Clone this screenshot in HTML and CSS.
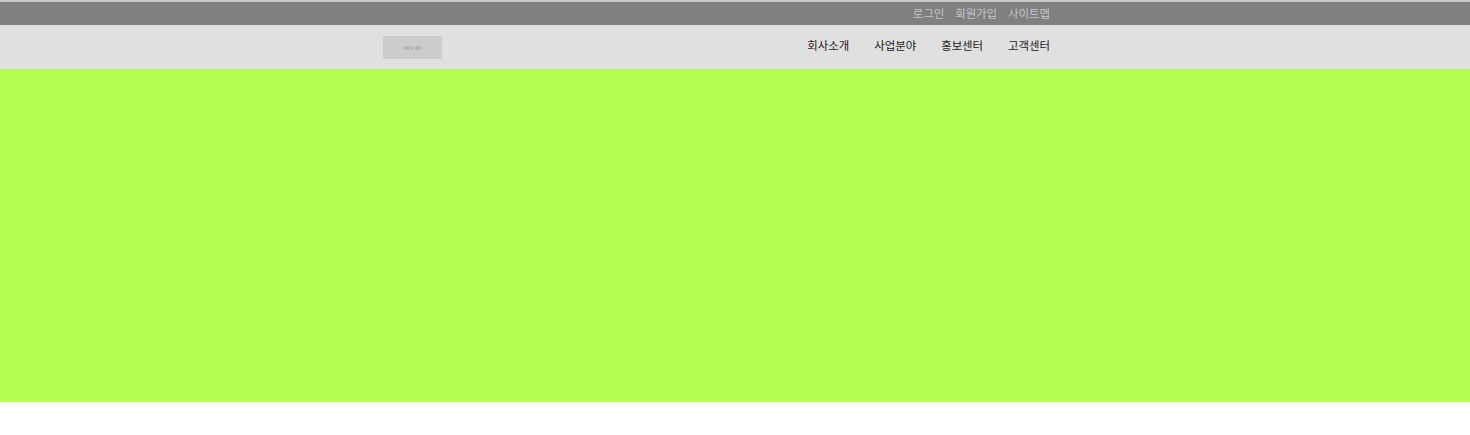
FILE: index.html
```html
<!DOCTYPE html>
<html lang="ko">
<head>
<meta charset="utf-8">
<title>Home</title>
<link rel="stylesheet" href="styles.css">
</head>
<body>
<div class="topline"></div>
<div class="topbar">
  <div class="inner topbar-inner">
    <a href="#">로그인</a>
    <a href="#">회원가입</a>
    <a href="#">사이트맵</a>
  </div>
</div>
<header class="header">
  <div class="inner header-inner">
    <div class="logo"><span>60 x 24</span></div>
    <nav class="nav">
      <a href="#">회사소개</a>
      <a href="#">사업분야</a>
      <a href="#">홍보센터</a>
      <a href="#">고객센터</a>
    </nav>
  </div>
</header>
<section class="hero"></section>
</body>
</html>
```
FILE: styles.css
```css
html, body {
  margin: 0;
  padding: 0;
  background: #ffffff;
  font-family: "Noto Sans CJK KR", "Noto Sans", sans-serif;
}
a { text-decoration: none; }
.inner {
  width: 667px;
  margin-left: 383px;
  box-sizing: border-box;
}
.topline {
  height: 2px;
  background: #c6c6c6;
}
.topbar {
  height: 23px;
  background: #808080;
}
.topbar-inner {
  height: 100%;
  display: flex;
  justify-content: flex-end;
  align-items: center;
  gap: 11px;
}
.topbar-inner a {
  color: #e4e4e4;
  font-size: 11.4px;
  line-height: 1;
  font-weight: 300;
}
.header {
  height: 44px;
  background: #e0e0e0;
}
.header-inner {
  height: 100%;
  display: flex;
  align-items: center;
  justify-content: space-between;
}
.logo {
  width: 59px;
  height: 23px;
  margin-top: 1px;
  background: #cccccc;
  display: flex;
  align-items: center;
  justify-content: center;
}
.logo span {
  font-family: "Liberation Sans", sans-serif;
  font-size: 5px;
  font-weight: bold;
  color: #a0a0a0;
}
.nav {
  display: flex;
  gap: 25px;
  margin-bottom: 3px;
}
.nav a {
  color: #1a1a1a;
  font-size: 11.4px;
  line-height: 1;
  font-weight: 400;
}
.hero {
  height: 333px;
  background: #b2ff4f;
}
```
